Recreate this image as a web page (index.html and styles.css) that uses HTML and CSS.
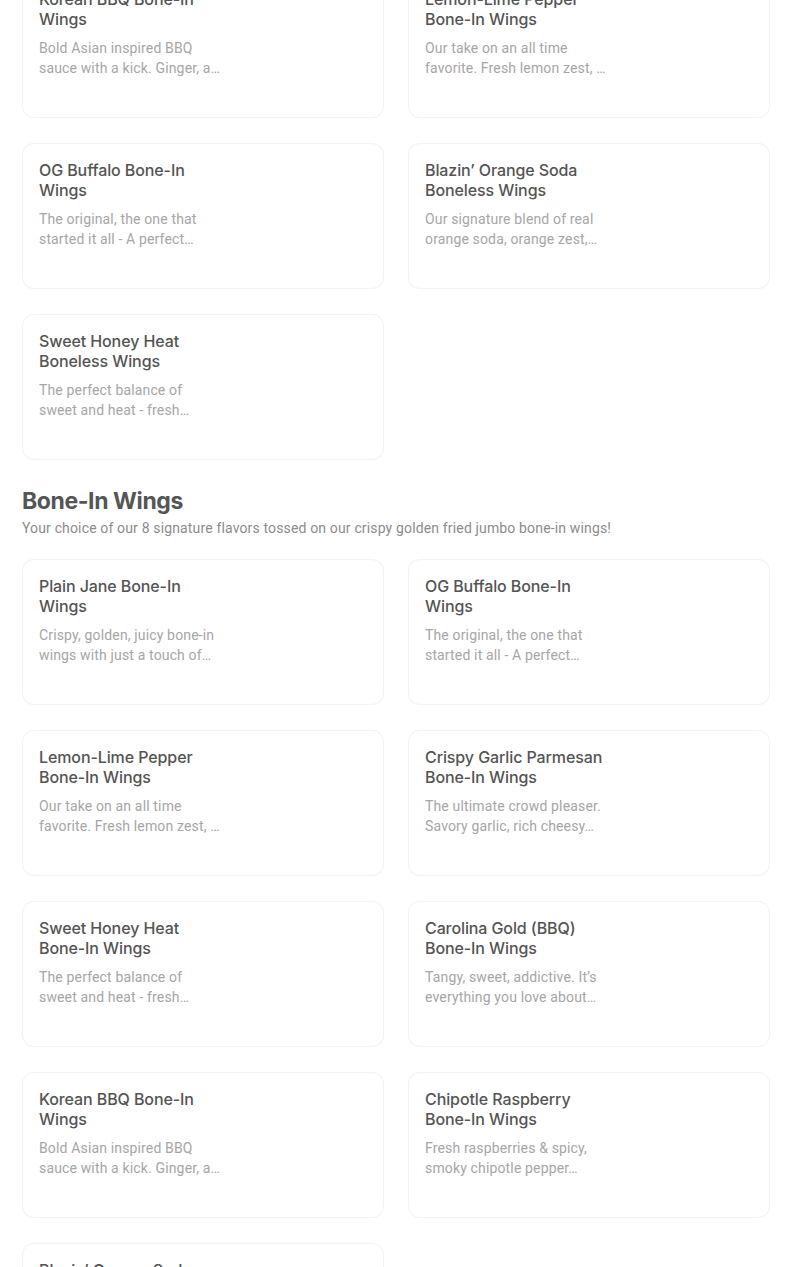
FILE: index.html
```html
<!DOCTYPE html>
<html lang="en">
<head>
<meta charset="utf-8">
<title>Menu</title>
<link rel="stylesheet" href="styles.css">
</head>
<body>
<main class="menu">
  <section class="section">
    <div class="grid">
      <article class="card"><div class="info"><h3 class="title">Korean BBQ Bone-In Wings</h3><p class="desc">Bold Asian inspired BBQ sauce with a kick. Ginger, a…</p></div></article>
      <article class="card"><div class="info"><h3 class="title">Lemon-Lime Pepper Bone-In Wings</h3><p class="desc">Our take on an all time favorite. Fresh lemon zest, …</p></div></article>
      <article class="card"><div class="info"><h3 class="title">OG Buffalo Bone-In Wings</h3><p class="desc">The original, the one that started it all - A perfect…</p></div></article>
      <article class="card"><div class="info"><h3 class="title">Blazin’ Orange Soda Boneless Wings</h3><p class="desc">Our signature blend of real orange soda, orange zest,…</p></div></article>
      <article class="card"><div class="info"><h3 class="title">Sweet Honey Heat Boneless Wings</h3><p class="desc">The perfect balance of sweet and heat - fresh…</p></div></article>
    </div>
  </section>

  <section class="section">
    <header class="section-head">
      <h2 class="section-title">Bone-In Wings</h2>
      <p class="section-sub">Your choice of our 8 signature flavors tossed on our crispy golden fried jumbo bone-in wings!</p>
    </header>
    <div class="grid">
      <article class="card"><div class="info"><h3 class="title">Plain Jane Bone-In Wings</h3><p class="desc">Crispy, golden, juicy bone-in wings with just a touch of…</p></div></article>
      <article class="card"><div class="info"><h3 class="title">OG Buffalo Bone-In Wings</h3><p class="desc">The original, the one that started it all - A perfect…</p></div></article>
      <article class="card"><div class="info"><h3 class="title">Lemon-Lime Pepper Bone-In Wings</h3><p class="desc">Our take on an all time favorite. Fresh lemon zest, …</p></div></article>
      <article class="card"><div class="info"><h3 class="title">Crispy Garlic Parmesan Bone-In Wings</h3><p class="desc">The ultimate crowd pleaser. Savory garlic, rich cheesy…</p></div></article>
      <article class="card"><div class="info"><h3 class="title">Sweet Honey Heat Bone-In Wings</h3><p class="desc">The perfect balance of sweet and heat - fresh…</p></div></article>
      <article class="card"><div class="info"><h3 class="title">Carolina Gold (BBQ) Bone-In Wings</h3><p class="desc">Tangy, sweet, addictive. It’s everything you love about…</p></div></article>
      <article class="card"><div class="info"><h3 class="title">Korean BBQ Bone-In Wings</h3><p class="desc">Bold Asian inspired BBQ sauce with a kick. Ginger, a…</p></div></article>
      <article class="card"><div class="info"><h3 class="title">Chipotle Raspberry Bone-In Wings</h3><p class="desc">Fresh raspberries &amp; spicy, smoky chipotle pepper…</p></div></article>
      <article class="card"><div class="info"><h3 class="title">Blazin’ Orange Soda Bone-In Wings</h3><p class="desc">Our signature blend of real orange soda, orange zest,…</p></div></article>
    </div>
  </section>
</main>
</body>
</html>
```

FILE: styles.css
```css
html, body {
  margin: 0;
  padding: 0;
  background: #ffffff;
}

body {
  font-family: "Inter", "Roboto", "Liberation Sans", sans-serif;
  color: #545454;
  overflow: hidden;
}

.menu {
  width: 748px;
  margin: -28px 0 0 22px;
}

.grid {
  display: grid;
  grid-template-columns: 362px 362px;
  column-gap: 24px;
  row-gap: 25px;
}

.card {
  box-sizing: border-box;
  height: 146px;
  border: 1px solid #f3f3f3;
  border-radius: 12px;
  padding: 16px 16px;
  background: #fff;
  display: flex;
  box-shadow: 0 0 1px rgba(0, 0, 0, 0.04);
}

.info {
  width: 183px;
}

.title {
  margin: 0;
  font-size: 16px;
  line-height: 20px;
  font-weight: 500;
  color: #545454;
  letter-spacing: -0.1px;
}

.desc {
  margin: 9px 0 0;
  font-family: "Roboto", "Liberation Sans", sans-serif;
  font-size: 14px;
  line-height: 20px;
  font-weight: 400;
  letter-spacing: 0.15px;
  color: #a6a6a6;
  display: -webkit-box;
  -webkit-line-clamp: 2;
  -webkit-box-orient: vertical;
  overflow: hidden;
}

.section-head {
  padding: 26px 0 21px;
}

.section-title {
  margin: 0;
  font-size: 23px;
  line-height: 30px;
  font-weight: 700;
  color: #555555;
  letter-spacing: -0.4px;
}

.section-sub {
  margin: 2px 0 0;
  font-family: "Roboto", "Liberation Sans", sans-serif;
  font-size: 14px;
  line-height: 20px;
  letter-spacing: 0.15px;
  color: #8c8c8c;
}
```
